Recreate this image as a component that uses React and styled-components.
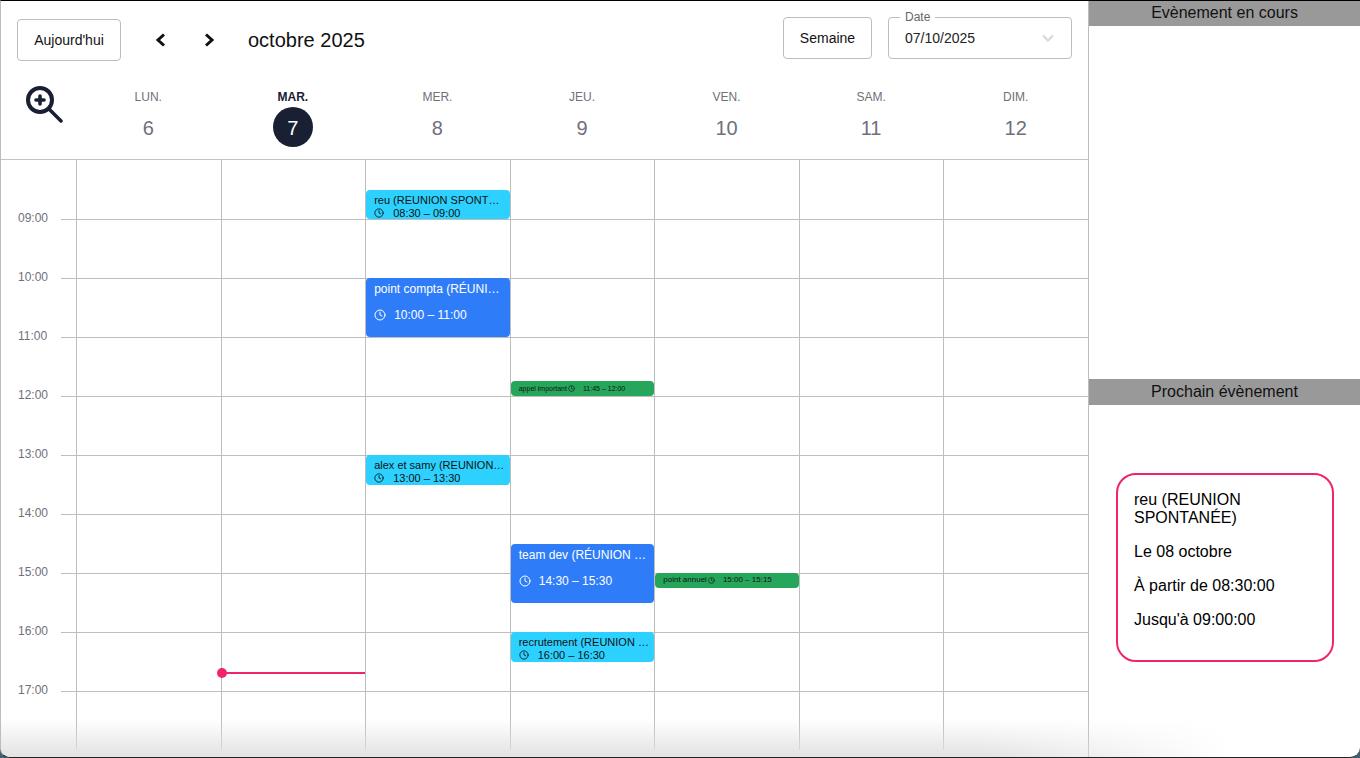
import styled, { createGlobalStyle } from 'styled-components';
import { Clock } from 'lucide-react';

const HOUR_HEIGHT = 59;
const FIRST_HOUR = 8;

const days = [
  { name: 'LUN.', date: 6 },
  { name: 'MAR.', date: 7, today: true },
  { name: 'MER.', date: 8 },
  { name: 'JEU.', date: 9 },
  { name: 'VEN.', date: 10 },
  { name: 'SAM.', date: 11 },
  { name: 'DIM.', date: 12 },
];

const hours = [8, 9, 10, 11, 12, 13, 14, 15, 16, 17];

const events = [
  { day: 2, kind: 'short', start: 8.5, end: 9, title: 'reu (REUNION SPONT…', time: '08:30 – 09:00' },
  { day: 2, kind: 'long', start: 10, end: 11, title: 'point compta (RÉUNI…', time: '10:00 – 11:00' },
  { day: 2, kind: 'short', start: 13, end: 13.5, title: 'alex et samy (REUNION…', time: '13:00 – 13:30' },
  { day: 3, kind: 'call', start: 11.75, end: 12, title: 'appel important', time: '11:45 – 12:00', size: 7 },
  { day: 3, kind: 'long', start: 14.5, end: 15.5, title: 'team dev (RÉUNION …', time: '14:30 – 15:30' },
  { day: 3, kind: 'short', start: 16, end: 16.5, title: 'recrutement (REUNION …', time: '16:00 – 16:30' },
  { day: 4, kind: 'call', start: 15, end: 15.25, title: 'point annuel', time: '15:00 – 15:15', size: 8 },
];

const NOW = 16.68;

const eventColors = { short: '#2cd1ff', long: '#2f7cf9', call: '#26a65b' };
const fontSizes = { short: 11, long: 12 };
const clockSizes = { short: 10, long: 12, call: 7 };
const hourToY = (h) => (h - FIRST_HOUR) * HOUR_HEIGHT;

export default function App() {
  return (
    <>
      <GlobalStyle />
      <Window>
        <Calendar>
          <Toolbar>
            <NavGroup>
              <OutlinedButton>Aujourd'hui</OutlinedButton>
              <ArrowButton $first>
                <svg width="26" height="26" viewBox="0 0 26 26" fill="none" stroke="#111" strokeWidth="3">
                  <path d="M16 7.5l-6 5.5 6 5.5" />
                </svg>
              </ArrowButton>
              <ArrowButton>
                <svg width="26" height="26" viewBox="0 0 26 26" fill="none" stroke="#111" strokeWidth="3">
                  <path d="M10 7.5l6 5.5-6 5.5" />
                </svg>
              </ArrowButton>
              <MonthTitle>octobre 2025</MonthTitle>
            </NavGroup>
            <ViewGroup>
              <OutlinedButton $narrow>Semaine</OutlinedButton>
              <DateField>
                <DateLegend>Date</DateLegend>
                <span>07/10/2025</span>
                <svg width="14" height="14" viewBox="0 0 14 14" fill="none" stroke="#ddd8e0" strokeWidth="2.4">
                  <path d="M2 4.5l5 5 5-5" />
                </svg>
              </DateField>
            </ViewGroup>
          </Toolbar>

          <DaysHeader>
            <ZoomCell>
              <svg width="37" height="37" viewBox="0 0 37 37" fill="none" stroke="#1a2033">
                <circle cx="14" cy="14" r="12" strokeWidth="4" />
                <path d="M24 24l11 11" strokeWidth="3.5" strokeLinecap="round" />
                <path d="M10 14h8M14 10v8" strokeWidth="3.6" strokeLinecap="round" />
              </svg>
            </ZoomCell>
            {days.map((d) => (
              <DayHead key={d.name}>
                <DayName $today={d.today}>{d.name}</DayName>
                <DayNumber $today={d.today}>{d.date}</DayNumber>
              </DayHead>
            ))}
          </DaysHeader>

          <TimeGrid>
            <Gutter>
              {hours.map((h) => (
                <GutterSlot key={h}>
                  {h > FIRST_HOUR && (
                    <>
                      <HourLabel>{String(h).padStart(2, '0')}:00</HourLabel>
                      <Tick />
                    </>
                  )}
                </GutterSlot>
              ))}
            </Gutter>
            {days.map((d, i) => (
              <DayColumn key={d.name}>
                {hours.map((h) => (
                  <HourCell key={h} />
                ))}
                {d.today && (
                  <NowLine $top={hourToY(NOW)}>
                    <NowDot />
                  </NowLine>
                )}
                {events
                  .filter((e) => e.day === i)
                  .map((e) => (
                    <EventCard
                      key={e.title}
                      $kind={e.kind}
                      $top={hourToY(e.start)}
                      $height={(e.end - e.start) * HOUR_HEIGHT}
                    >
                      <EventTitle $kind={e.kind} $size={e.size || fontSizes[e.kind]}>
                        {e.title}
                      </EventTitle>
                      <EventTime $kind={e.kind} $size={e.size || fontSizes[e.kind]}>
                        <Clock size={clockSizes[e.kind]} strokeWidth={2} />
                        <span>{e.time}</span>
                      </EventTime>
                    </EventCard>
                  ))}
              </DayColumn>
            ))}
          </TimeGrid>
        </Calendar>

        <SidePanel>
          <CurrentSection>
            <SectionTitle $height={25}>Evènement en cours</SectionTitle>
          </CurrentSection>
          <NextSection>
            <SectionTitle $height={26}>Prochain évènement</SectionTitle>
            <NextCard>
              <CardLine>reu (REUNION SPONTANÉE)</CardLine>
              <CardLine>Le 08 octobre</CardLine>
              <CardLine>À partir de 08:30:00</CardLine>
              <CardLine>Jusqu'à 09:00:00</CardLine>
            </NextCard>
          </NextSection>
        </SidePanel>
        <BottomFade />
      </Window>
    </>
  );
}

const GlobalStyle = createGlobalStyle`
  * {
    box-sizing: border-box;
  }
  html, body {
    margin: 0;
    padding: 0;
    background: #3f5f73;
    font-family: "Liberation Sans", Arial, sans-serif;
  }
`;

const Window = styled.div`
  position: relative;
  width: 1360px;
  height: 758px;
  display: flex;
  background: #fff;
  border-top: 1px solid #000;
  border-bottom: 1px solid #222;
  border-left: 1px solid #bdbdbd;
  border-radius: 0 0 10px 10px;
  overflow: hidden;
`;

const Calendar = styled.main`
  width: 1087px;
  display: flex;
  flex-direction: column;
`;

const Toolbar = styled.header`
  height: 80px;
  padding: 16px 16px 0;
  display: flex;
  justify-content: space-between;
  align-items: flex-start;
`;

const NavGroup = styled.div`
  display: flex;
  align-items: center;
  margin-top: 2px;
`;

const ViewGroup = styled.div`
  display: flex;
  gap: 16px;
`;

const OutlinedButton = styled.button`
  height: 42px;
  width: ${(p) => (p.$narrow ? '89px' : '104px')};
  padding: 0;
  background: #fff;
  border: 1px solid #bdbdbd;
  border-radius: 4px;
  color: #111;
  font-family: inherit;
  font-size: 14px;
`;

const ArrowButton = styled.button`
  width: 26px;
  height: 26px;
  margin-left: ${(p) => (p.$first ? '27px' : '22px')};
  padding: 0;
  display: flex;
  background: none;
  border: 0;
`;

const MonthTitle = styled.h1`
  margin: 0 0 0 26px;
  color: #111;
  font-size: 20px;
  font-weight: 400;
`;

const DateField = styled.div`
  position: relative;
  width: 184px;
  height: 42px;
  padding: 0 16px 0 16px;
  display: flex;
  align-items: center;
  justify-content: space-between;
  border: 1px solid #bdbdbd;
  border-radius: 4px;
  color: #222;
  font-size: 14px;
`;

const DateLegend = styled.label`
  position: absolute;
  top: -7px;
  left: 11px;
  padding: 0 5px;
  background: #fff;
  color: #666;
  font-size: 12px;
  line-height: 13px;
`;

const DaysHeader = styled.div`
  height: 79px;
  display: grid;
  grid-template-columns: 75px repeat(7, 1fr);
  border-bottom: 1px solid #c4c4c4;
`;

const ZoomCell = styled.div`
  padding: 5px 0 0 25px;
`;

const DayHead = styled.div`
  display: flex;
  flex-direction: column;
  align-items: center;
`;

const DayName = styled.div`
  margin-top: 9px;
  color: ${(p) => (p.$today ? '#1a2033' : '#70707a')};
  font-size: 12px;
  font-weight: ${(p) => (p.$today ? 700 : 400)};
  line-height: 14px;
`;

const DayNumber = styled.div`
  width: 40px;
  height: 40px;
  margin-top: 3px;
  padding-top: 2px;
  display: flex;
  align-items: center;
  justify-content: center;
  border-radius: 50%;
  background: ${(p) => (p.$today ? '#1a2033' : 'transparent')};
  color: ${(p) => (p.$today ? '#fff' : '#70707a')};
  font-size: 20px;
`;

const TimeGrid = styled.div`
  display: grid;
  grid-template-columns: 75px repeat(7, 1fr);
  align-items: start;
`;

const Gutter = styled.div`
  display: flex;
  flex-direction: column;
`;

const GutterSlot = styled.div`
  height: ${HOUR_HEIGHT}px;
  display: flex;
  align-items: flex-start;
`;

const HourLabel = styled.span`
  width: 60px;
  margin-top: -8px;
  padding-left: 17px;
  color: #70707a;
  font-size: 12px;
  line-height: 14px;
`;

const Tick = styled.div`
  flex: 1;
  border-top: 1px solid #bdbdbd;
`;

const DayColumn = styled.div`
  position: relative;
  border-left: 1px solid #bdbdbd;
`;

const HourCell = styled.div`
  height: ${HOUR_HEIGHT}px;

  & + & {
    border-top: 1px solid #bdbdbd;
  }
`;

const EventCard = styled.article`
  position: absolute;
  top: ${(p) => p.$top}px;
  left: 0;
  right: 0;
  height: ${(p) => p.$height}px;
  padding: ${(p) => (p.$kind === 'long' ? '4px 8px' : p.$kind === 'short' ? '4px 8px 0' : '0 8px')};
  display: flex;
  flex-direction: ${(p) => (p.$kind === 'call' ? 'row' : 'column')};
  align-items: ${(p) => (p.$kind === 'call' ? 'center' : 'stretch')};
  gap: ${(p) => (p.$kind === 'long' ? '12px' : '0')};
  overflow: hidden;
  background: ${(p) => eventColors[p.$kind]};
  border-radius: 4px;
  color: ${(p) => (p.$kind === 'long' ? '#fff' : '#111')};
`;

const EventTitle = styled.div`
  font-size: ${(p) => p.$size}px;
  line-height: ${(p) => (p.$kind === 'long' ? '14px' : p.$kind === 'short' ? '13px' : '10px')};
  white-space: nowrap;
`;

const EventTime = styled.div`
  display: flex;
  align-items: center;
  gap: ${(p) => (p.$kind === 'long' ? '8px' : p.$kind === 'short' ? '9px' : '8px')};
  margin-left: ${(p) => (p.$kind === 'call' ? '1px' : '0')};
  font-size: ${(p) => p.$size}px;
  line-height: ${(p) => (p.$kind === 'long' ? '14px' : p.$kind === 'short' ? '12px' : '10px')};
  white-space: nowrap;

  svg {
    flex-shrink: 0;
  }
`;

const NowLine = styled.div`
  position: absolute;
  top: ${(p) => p.$top}px;
  left: 0;
  right: 0;
  height: 2px;
  background: #f0246e;
`;

const NowDot = styled.div`
  position: absolute;
  top: -4px;
  left: -5px;
  width: 10px;
  height: 10px;
  border-radius: 50%;
  background: #f0246e;
`;

const SidePanel = styled.aside`
  flex: 1;
  display: flex;
  flex-direction: column;
  border-left: 1px solid #bdbdbd;
`;

const CurrentSection = styled.section`
  height: 378px;
`;

const NextSection = styled.section`
  flex: 1;
`;

const SectionTitle = styled.h2`
  height: ${(p) => p.$height}px;
  margin: 0;
  background: #999;
  color: #111;
  font-size: 16px;
  font-weight: 400;
  line-height: ${(p) => p.$height - 1}px;
  text-align: center;
`;

const NextCard = styled.div`
  width: 218px;
  height: 189px;
  margin: 68px 0 0 27px;
  padding: 16px 16px;
  border: 2px solid #f0246e;
  border-radius: 20px;
  color: #000;
  font-size: 16px;
  line-height: 18px;
`;

const CardLine = styled.p`
  margin: 0 0 16px;
`;

const BottomFade = styled.div`
  position: absolute;
  left: 0;
  right: 130px;
  bottom: 0;
  height: 38px;
  background: linear-gradient(to bottom, rgba(225, 225, 225, 0), rgba(225, 225, 225, 0.95));
  mask-image: linear-gradient(to right, #000 80%, transparent);
  pointer-events: none;
`;
